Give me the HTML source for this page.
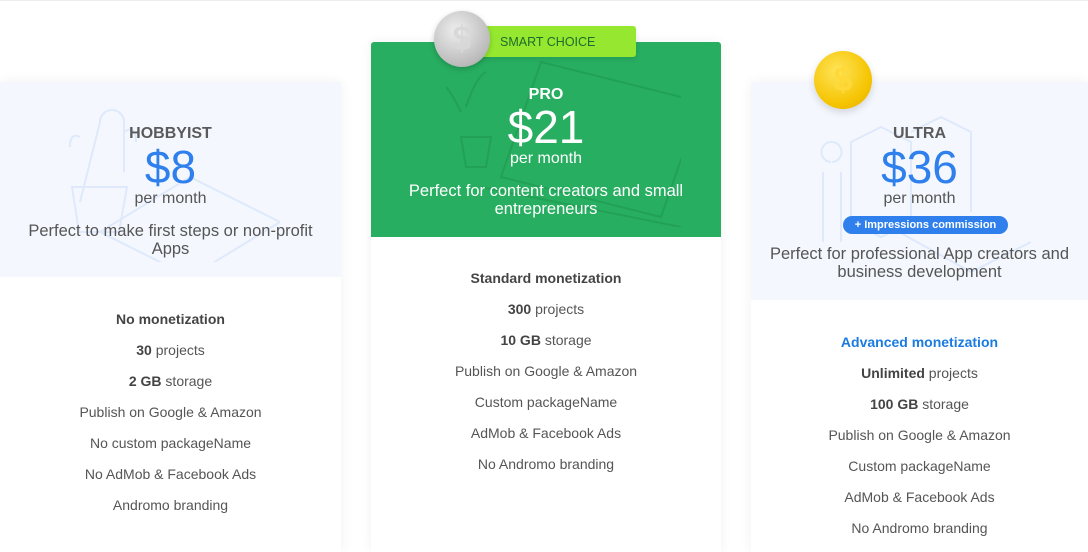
<!DOCTYPE html>
<html><head><style>
body{margin:0;width:1088px;height:545px;overflow:hidden;background:#fff;font-family:"Liberation Sans",sans-serif;color:#555;position:relative}
.card{position:absolute;background:#fff;box-shadow:0 0 12px rgba(0,0,0,0.06)}
.hd{position:absolute;left:0;right:0;top:0;background:#f4f8fe}
.t{position:absolute;left:0;right:0;text-align:center;white-space:nowrap}
.name{font-size:16px;font-weight:bold;color:#5a5a5a}
.price{font-size:46px;color:#2f80ed;line-height:46px}
.pm{font-size:16px}
.desc{font-size:16.5px;line-height:18px;white-space:normal}
.li{font-size:14px;color:#555}
b{color:#444}
</style></head><body>
<div style="position:absolute;left:0;right:0;top:0;height:1px;background:#eee"></div>

<!-- left -->
<div class="card" style="left:0;top:82px;width:341px;height:470px">
 <div class="hd" style="height:195px"></div>
 <svg style="position:absolute;left:60px;top:20px" width="220" height="160" fill="none" stroke="#dfe9fb" stroke-width="2"><path d="M20 100 l20 -80 a12 12 0 0 1 24 0 l0 50 M10 45 q0 -15 10 -10 M64 30 q12 -8 12 10"/><path d="M12 85 h55 l-8 45 h-40z"/><path d="M40 130 l90 -55 l90 45 l-90 55z"/></svg>
 <div class="t name" style="top:43px">HOBBYIST</div>
 <div class="t price" style="top:62px">$8</div>
 <div class="t pm" style="top:108px">per month</div>
 <div class="t desc" style="top:140px;padding:0 20px">Perfect to make first steps or non-profit Apps</div>
 <div class="t li" style="top:229px"><b>No monetization</b></div>
 <div class="t li" style="top:260px"><b>30</b> projects</div>
 <div class="t li" style="top:291px"><b>2 GB</b> storage</div>
 <div class="t li" style="top:322px">Publish on Google &amp; Amazon</div>
 <div class="t li" style="top:353px">No custom packageName</div>
 <div class="t li" style="top:384px">No AdMob &amp; Facebook Ads</div>
 <div class="t li" style="top:415px">Andromo branding</div>
</div>

<!-- middle -->
<div class="card" style="left:371px;top:42px;width:350px;height:510px;border-radius:3px 3px 0 0">
 <div class="hd" style="height:195px;background:#27ae60;border-radius:3px 3px 0 0"></div>
 <svg style="position:absolute;left:70px;top:15px" width="240" height="170" fill="none" stroke="#22a156" stroke-width="2"><path d="M20 55 q-10 -20 -15 -25 M25 50 q10 -30 20 -35 M20 80 h30 l-5 30 h-20z"/><path d="M60 120 l40 -115 l160 40 l-40 115z M40 130 l200 40"/></svg>
 <div class="t name" style="top:44px;color:#fff">PRO</div>
 <div class="t price" style="top:62px;color:#fff">$21</div>
 <div class="t pm" style="top:108px;color:#fff">per month</div>
 <div class="t desc" style="top:140px;color:#fff;padding:0 20px">Perfect for content creators and small entrepreneurs</div>
 <div class="t li" style="top:228px"><b>Standard monetization</b></div>
 <div class="t li" style="top:259px"><b>300</b> projects</div>
 <div class="t li" style="top:290px"><b>10 GB</b> storage</div>
 <div class="t li" style="top:321px">Publish on Google &amp; Amazon</div>
 <div class="t li" style="top:352px">Custom packageName</div>
 <div class="t li" style="top:383px">AdMob &amp; Facebook Ads</div>
 <div class="t li" style="top:414px">No Andromo branding</div>
</div>
<div style="position:absolute;left:470px;top:26px;width:166px;height:31px;background:#95e82f;border-radius:3px;box-shadow:0 2px 6px rgba(0,0,0,.1)"></div>
<div style="position:absolute;left:500px;top:35px;font-size:12.5px;color:#1e6b2e">SMART CHOICE</div>
<div style="position:absolute;left:434px;top:11px;width:56px;height:56px;border-radius:50%;background:radial-gradient(circle at 40% 35%,#eee,#bbb 70%,#999);box-shadow:0 2px 6px rgba(0,0,0,.2);color:#d8d8d8;font-size:34px;font-weight:bold;text-align:center;line-height:56px">$</div>

<!-- right -->
<div class="card" style="left:751px;top:82px;width:337px;height:470px">
 <div class="hd" style="height:218px"></div>
 <svg style="position:absolute;left:60px;top:20px" width="230" height="180" fill="none" stroke="#dfe9fb" stroke-width="2"><path d="M40 40 l30 -15 l30 15 v80 l-30 15 l-30 -15z M100 30 l30 -15 l30 15 v80 M70 120 l90 50 l60 -30 M20 60 a10 10 0 1 1 1 0 M12 70 v70 M30 70 v70"/></svg>
 <div class="t name" style="top:43px">ULTRA</div>
 <div class="t price" style="top:62px">$36</div>
 <div class="t pm" style="top:108px">per month</div>
 <div style="position:absolute;left:92px;top:134px;width:165px;height:18px;border-radius:9px;background:#2f80ed;color:#fff;font-size:11px;font-weight:bold;text-align:center;line-height:18px">+ Impressions commission</div>
 <div class="t desc" style="top:163px;padding:0 10px">Perfect for professional App creators and business development</div>
 <div class="t li" style="top:252px"><b style="color:#1a7be0">Advanced monetization</b></div>
 <div class="t li" style="top:283px"><b>Unlimited</b> projects</div>
 <div class="t li" style="top:314px"><b>100 GB</b> storage</div>
 <div class="t li" style="top:345px">Publish on Google &amp; Amazon</div>
 <div class="t li" style="top:376px">Custom packageName</div>
 <div class="t li" style="top:407px">AdMob &amp; Facebook Ads</div>
 <div class="t li" style="top:438px">No Andromo branding</div>
</div>
<div style="position:absolute;left:814px;top:51px;width:58px;height:58px;border-radius:50%;background:radial-gradient(circle at 40% 35%,#ffe45a,#f5c400 65%,#e0a800);box-shadow:0 3px 8px rgba(0,0,0,.15);color:#ffd93a;font-size:34px;font-weight:bold;text-align:center;line-height:58px">$</div>
</body></html>
